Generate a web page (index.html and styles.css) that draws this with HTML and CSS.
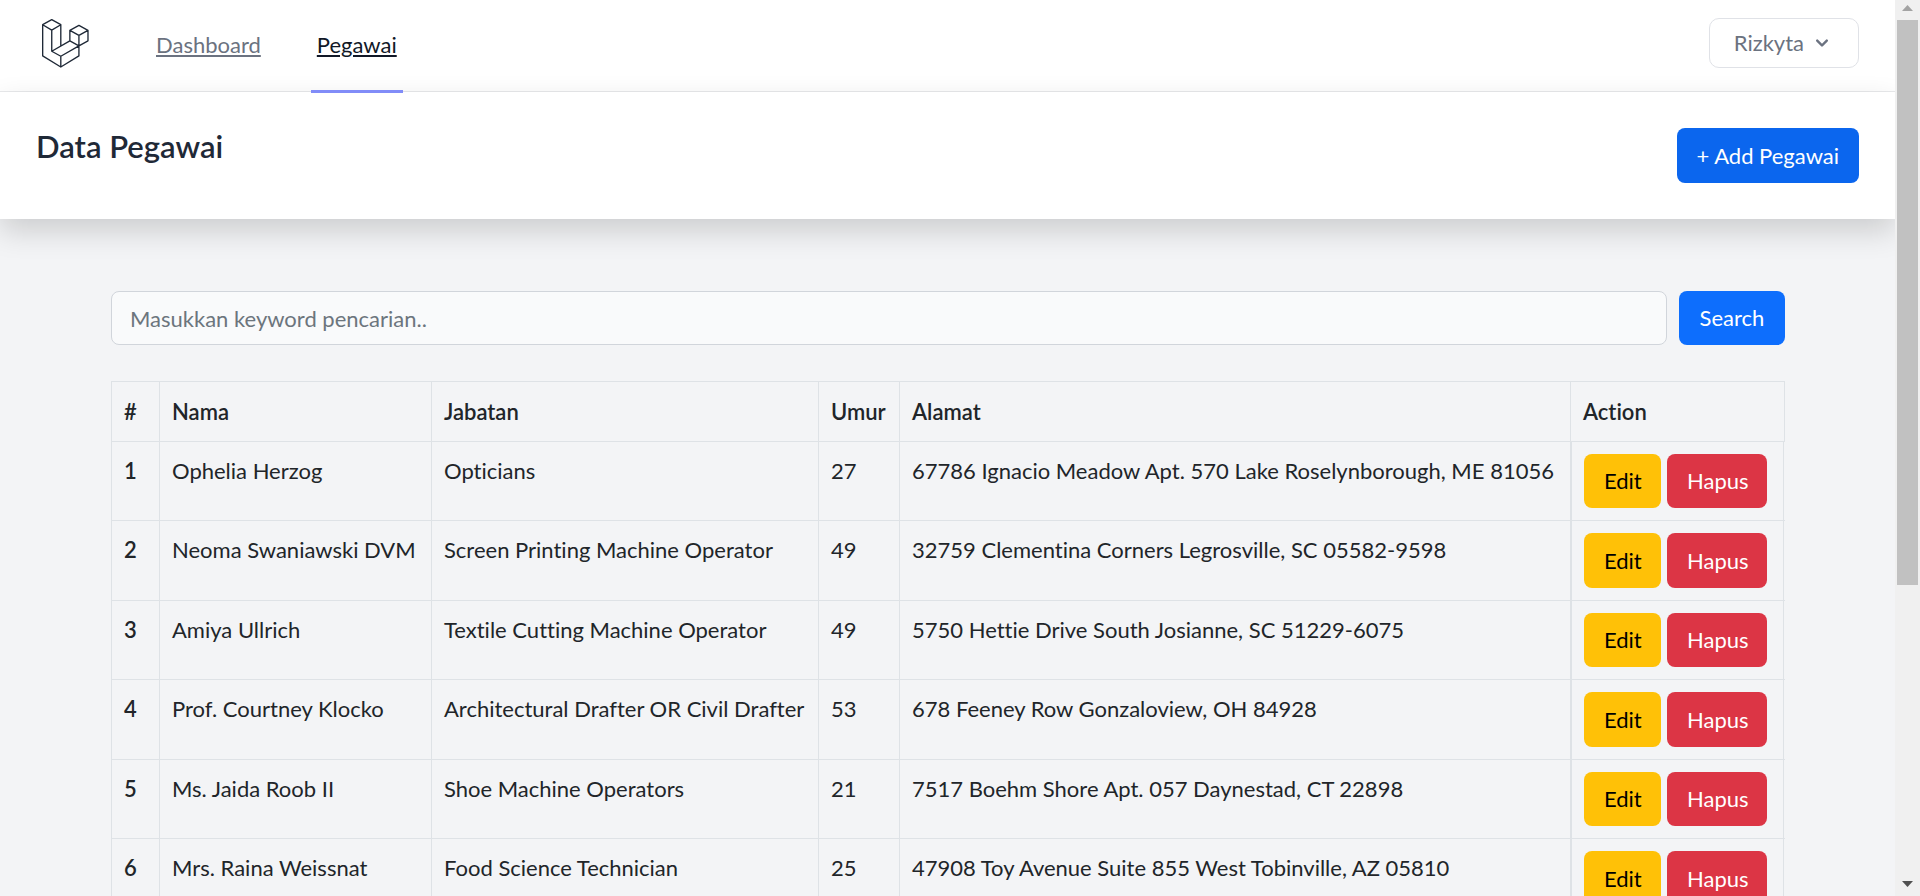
FILE: index.html
```html
<!DOCTYPE html>
<html lang="id">
<head>
<meta charset="utf-8">
<title>Data Pegawai</title>
<link rel="stylesheet" href="styles.css">
</head>
<body>
<nav class="nav">
  <a class="logo" href="#" aria-label="Laravel">
    <svg width="47" height="49" viewBox="36 26 140 146" fill="none" stroke="#1f2937" stroke-width="4" stroke-linejoin="round">
      <path d="M65 28 38 43 65 59 92 43ZM38 43V136L92 169 146 136V106M65 59V122L92 137V169M92 43V106M65 122 119 91 146 106 92 137M146 45 119 60 146 75 173 60ZM119 60V91M146 75V106L173 91V60"/>
    </svg>
  </a>
  <div class="links">
    <a class="link" href="#">Dashboard</a>
    <a class="link active" href="#">Pegawai</a>
  </div>
  <button class="user" type="button">Rizkyta
    <svg width="24" height="24" viewBox="0 0 20 20" fill="#6b7280"><path d="M5.293 7.293a1 1 0 0 1 1.414 0L10 10.586l3.293-3.293a1 1 0 1 1 1.414 1.414l-4 4a1 1 0 0 1-1.414 0l-4-4a1 1 0 0 1 0-1.414z"/></svg>
  </button>
</nav>
<header class="header">
  <h2 class="title">Data Pegawai</h2>
  <button class="btn add" type="button">+ Add Pegawai</button>
</header>
<main class="main">
  <form class="search">
    <input class="field" type="search" aria-label="Keyword" placeholder="Masukkan keyword pencarian..">
    <button class="btn primary" type="button">Search</button>
  </form>
  <table class="table">
    <colgroup><col class="c-no"><col class="c-name"><col class="c-job"><col class="c-age"><col><col class="c-act"></colgroup>
    <thead><tr><th>#</th><th>Nama</th><th>Jabatan</th><th>Umur</th><th>Alamat</th><th>Action</th></tr></thead>
    <tbody>
      <tr><th>1</th><td>Ophelia Herzog</td><td>Opticians</td><td>27</td><td>67786 Ignacio Meadow Apt. 570 Lake Roselynborough, ME 81056</td><td class="act"><div class="actions"><button class="btn edit" type="button">Edit</button><button class="btn delete" type="button">Hapus</button></div></td></tr>
      <tr><th>2</th><td>Neoma Swaniawski DVM</td><td>Screen Printing Machine Operator</td><td>49</td><td>32759 Clementina Corners Legrosville, SC 05582-9598</td><td class="act"><div class="actions"><button class="btn edit" type="button">Edit</button><button class="btn delete" type="button">Hapus</button></div></td></tr>
      <tr><th>3</th><td>Amiya Ullrich</td><td>Textile Cutting Machine Operator</td><td>49</td><td>5750 Hettie Drive South Josianne, SC 51229-6075</td><td class="act"><div class="actions"><button class="btn edit" type="button">Edit</button><button class="btn delete" type="button">Hapus</button></div></td></tr>
      <tr><th>4</th><td>Prof. Courtney Klocko</td><td>Architectural Drafter OR Civil Drafter</td><td>53</td><td>678 Feeney Row Gonzaloview, OH 84928</td><td class="act"><div class="actions"><button class="btn edit" type="button">Edit</button><button class="btn delete" type="button">Hapus</button></div></td></tr>
      <tr><th>5</th><td>Ms. Jaida Roob II</td><td>Shoe Machine Operators</td><td>21</td><td>7517 Boehm Shore Apt. 057 Daynestad, CT 22898</td><td class="act"><div class="actions"><button class="btn edit" type="button">Edit</button><button class="btn delete" type="button">Hapus</button></div></td></tr>
      <tr><th>6</th><td>Mrs. Raina Weissnat</td><td>Food Science Technician</td><td>25</td><td>47908 Toy Avenue Suite 855 West Tobinville, AZ 05810</td><td class="act"><div class="actions"><button class="btn edit" type="button">Edit</button><button class="btn delete" type="button">Hapus</button></div></td></tr>
    </tbody>
  </table>
</main>
<div class="scrollbar" aria-hidden="true">
  <svg class="arrow" width="25" height="20" viewBox="0 0 25 20"><path d="M7 11 12.500 5 18 11Z" fill="#a3a3a3"/></svg>
  <div class="track"><div class="thumb"></div></div>
  <svg class="arrow" width="25" height="20" viewBox="0 0 25 20"><path d="M7 5 12.500 11 18 5Z" fill="#505050"/></svg>
</div>
</body>
</html>
```
FILE: styles.css
```css
* { box-sizing: border-box; }
body {
  margin: 0;
  padding-right: 25px;
  height: 100vh;
  overflow: hidden;
  background: #f3f4f6;
  color: #212529;
  font: 22px/30px Lato, "Open Sans", sans-serif;
  font-variant-ligatures: none;
}
button, input { font: inherit; font-variant-ligatures: none; }

.nav {
  display: flex;
  align-items: center;
  height: 92px;
  padding: 0 36px 0 42px;
  background: #fff;
  border-bottom: 1px solid #e9eaec;
}
.logo { display: flex; margin-bottom: 5px; }
.links { display: flex; gap: 44px; flex: 1; align-self: stretch; padding-left: 61px; }
.link {
  display: flex;
  align-items: center;
  height: 93px;
  padding: 0 6px;
  border-bottom: 3px solid transparent;
  color: #6b7280;
  text-decoration: underline;
  text-decoration-thickness: 2px;
  text-underline-offset: 2px;
  position: relative;
  z-index: 2;
}
.link.active { color: #111827; border-color: #818cf8; }
.user {
  display: flex;
  align-items: center;
  gap: 6px;
  height: 50px;
  margin-bottom: 5px;
  padding: 0 24px;
  background: #fff;
  border: 1px solid #e0e2e7;
  border-radius: 10px;
  color: #6b7280;
}

.header {
  display: flex;
  justify-content: space-between;
  align-items: flex-start;
  padding: 36px;
  background: #fff;
  box-shadow: 0 12px 28px rgba(0, 0, 0, .16);
  position: relative;
  z-index: 1;
}
.title { margin: 3px 0 0; font-size: 31px; line-height: 30px; font-weight: 600; color: #1f2937; }

.btn { height: 54px; padding: 0 20px; border: 0; border-radius: 8px; color: #fff; }
.add { height: 55px; background: #0b66ee; }
.primary { background: #0d6efd; }
.edit { background: #ffc107; color: #000; }
.delete { background: #dc3545; }

.main { padding: 72px 110px 0 111px; }
.search { display: flex; gap: 12px; margin: 0 0 36px; }
.field {
  flex: 1;
  height: 54px;
  padding: 0 18px;
  background: #f9fafb;
  border: 1px solid #d1d5db;
  border-radius: 8px;
  color: #212529;
}
.field::placeholder { color: #6c757d; opacity: 1; }
.primary { width: 106px; }

.table {
  width: 100%;
  table-layout: fixed;
  border-collapse: separate;
  border-spacing: 0;
  border-top: 1px solid #dee2e6;
  border-left: 1px solid #dee2e6;
}
.c-no { width: 48px; }
.c-name { width: 272px; }
.c-job { width: 387px; }
.c-age { width: 81px; }
.c-act { width: 214px; }
.table th, .table td {
  padding: 14px 12px;
  border-right: 1px solid #dee2e6;
  border-bottom: 1px solid #dee2e6;
  text-align: left;
  vertical-align: top;
  white-space: nowrap;
}
.table th { font-weight: 600; }
.table thead th { padding: 15px 12px 14px; }
.table .act { padding: 0; border-right: 0; }
.actions {
  display: flex;
  gap: 6px;
  margin-right: 1px;
  padding: 12px;
  border: solid #dee2e6;
  border-width: 0 1px;
}
.edit { width: 77px; }
.delete { width: 100px; }
/* alternate rows are one pixel taller */
.table tbody tr:nth-child(even) .btn { height: 55px; }

.scrollbar {
  position: fixed;
  top: 0;
  right: 0;
  bottom: 0;
  z-index: 3;
  width: 25px;
  display: flex;
  flex-direction: column;
  background: #f0f0f0;
}
.track { flex: 1; padding: 0 2px; }
.thumb { height: 66%; background: #c1c1c1; }
```
